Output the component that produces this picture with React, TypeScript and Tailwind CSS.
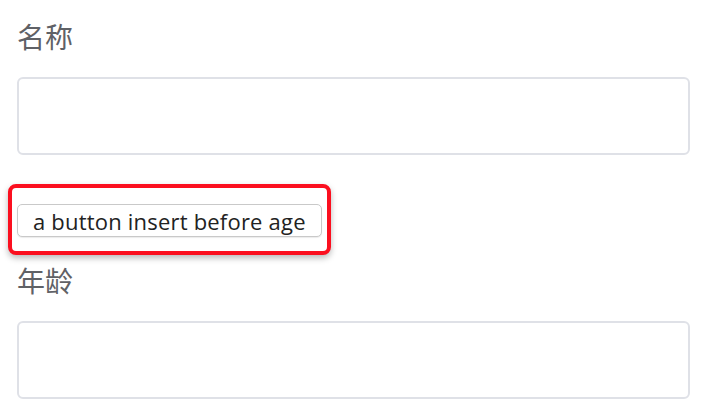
import React from "react";

export default function App() {
  const cjk = { fontFamily: '"Noto Sans CJK SC", "Noto Sans", sans-serif' } as React.CSSProperties;
  return (
    <div className="w-[702px] h-[414px] bg-white overflow-hidden flex flex-col">
      <div className="ml-[17px] mt-[18px] h-[36px] leading-[36px] text-[28px] text-[#5f6166]" style={cjk}>
        名称
      </div>
      <div className="ml-[17px] mr-[12px] mt-[23px] h-[78px] rounded-[6px] border-2 border-[#dfe1e7] bg-white" />
      <div className="ml-[8px] mt-[29px] self-start rounded-[8px] border-4 border-[#fb0f1f] pt-[16px] pb-[14px] px-[5px] shadow-[0_3px_6px_rgba(0,0,0,0.28)] bg-white">
        <button
          className="h-[33px] px-[15px] rounded-[5px] border border-[#c9c9c9] bg-white text-[22px] leading-none tracking-[0.2px] text-[#222] shadow-[0_1px_1px_rgba(0,0,0,0.08)]"
          style={{ fontFamily: '"Open Sans", "Liberation Sans", sans-serif' }}
        >
          a button insert before age
        </button>
      </div>
      <div className="ml-[17px] mt-[7px] h-[36px] leading-[36px] text-[28px] text-[#5f6166]" style={cjk}>
        年龄
      </div>
      <div className="ml-[17px] mr-[12px] mt-[23px] h-[78px] rounded-[6px] border-2 border-[#dfe1e7] bg-white" />
    </div>
  );
}
